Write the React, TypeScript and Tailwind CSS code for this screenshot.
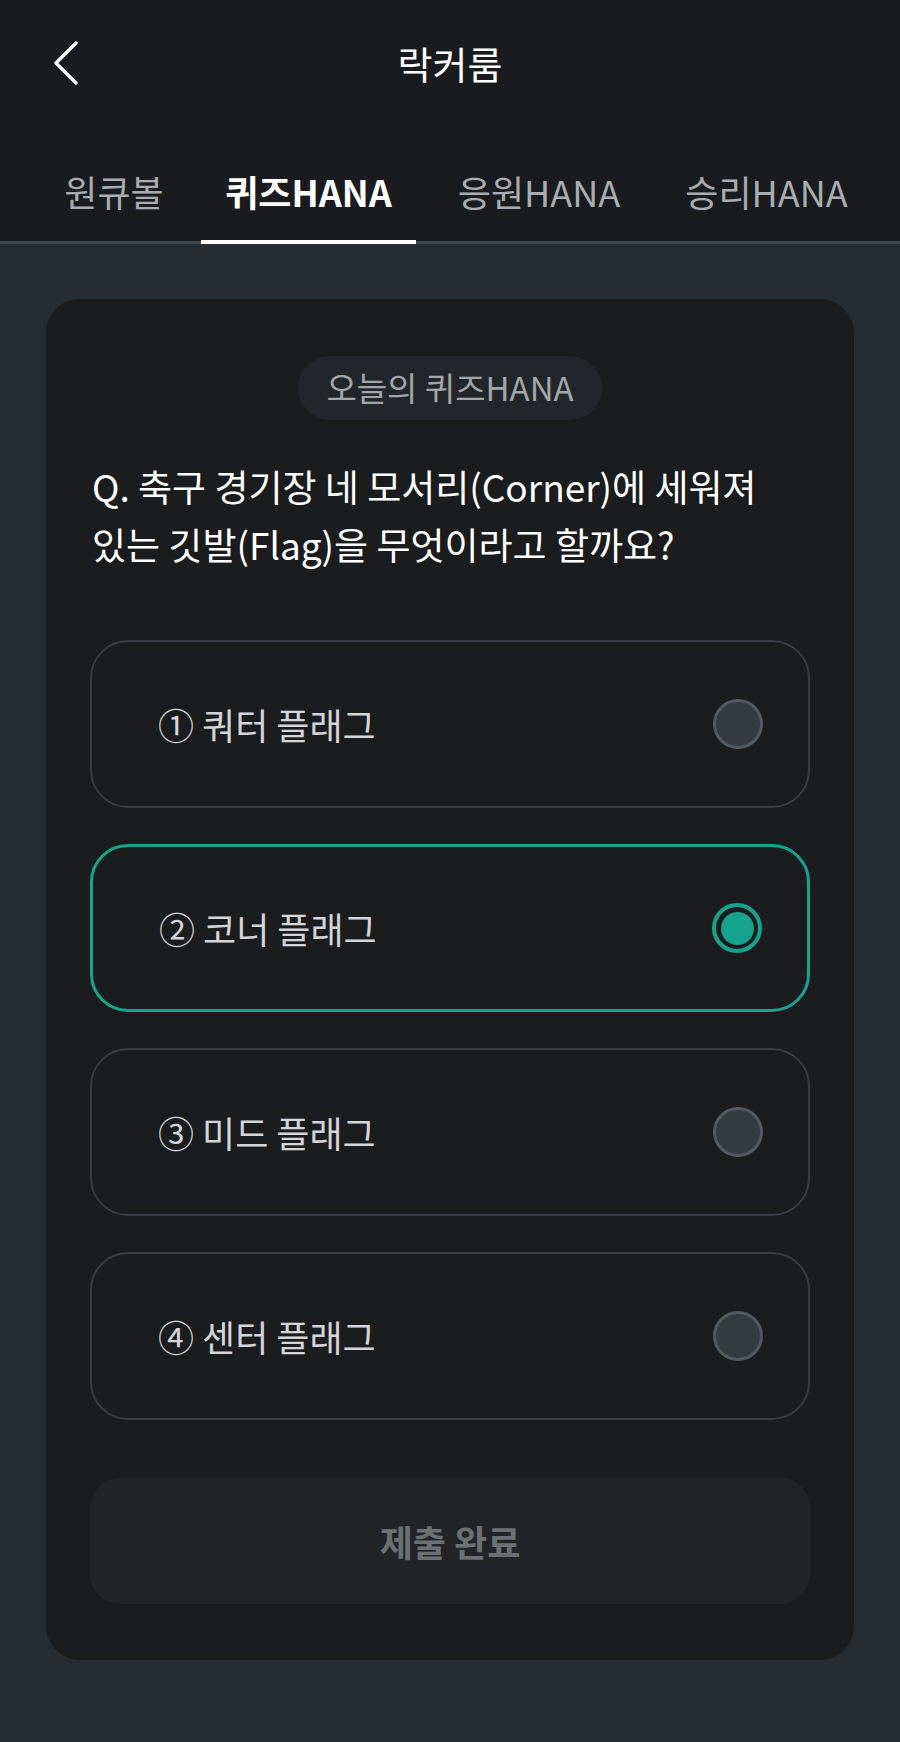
import { useState } from 'react';

/* =========================
   Data
========================= */
const TABS = [
  { label: '원큐볼', w: 'w-[136px]' },
  { label: '퀴즈HANA', w: 'w-[215px]' },
  { label: '응원HANA', w: 'w-[208px]' },
  { label: '승리HANA', w: 'w-[209px]' },
];

const OPTIONS = ['① 쿼터 플래그', '② 코너 플래그', '③ 미드 플래그', '④ 센터 플래그'];

/* =========================
   Page
========================= */
export default function App() {
  const [tab, setTab] = useState(1);
  const [picked, setPicked] = useState(1);

  return (
    <div
      className="min-h-[1742px] w-full bg-[#262c2f]"
      style={{ fontFamily: '"Noto Sans CJK KR", "Noto Sans", sans-serif' }}
    >
      {/* Header */}
      <header className="bg-[#1a1b1e] border-b-[3px] border-[#42484c]">
        <div className="grid h-[126px] grid-cols-[120px_1fr_120px] items-center">
          <div className="pl-[53px]">
            <button className="flex h-[44px] w-[26px] items-center" aria-label="back">
              <svg width="26" height="44" viewBox="0 0 26 44" fill="none">
                <path
                  d="M23 2 L3 22 L23 42"
                  stroke="#ffffff"
                  strokeWidth="3.2"
                  strokeLinecap="round"
                  strokeLinejoin="round"
                />
              </svg>
            </button>
          </div>
          <h1 className="text-center text-[38px] font-normal leading-none text-white">락커룸</h1>
          <div />
        </div>

        {/* Tabs */}
        <nav className="flex h-[115px] gap-[19px] pl-[46px]">
          {TABS.map((t, i) => (
            <button
              key={t.label}
              onClick={() => setTab(i)}
              className={`h-[118px] shrink-0 border-b-4 pt-[15px] text-center text-[36px] leading-[44px] ${t.w} ${
                tab === i ? 'border-white font-bold text-white' : 'border-transparent text-[#a9adb1]'
              }`}
            >
              {t.label}
            </button>
          ))}
        </nav>
      </header>

      {/* Quiz card */}
      <main className="px-[46px] pt-[55px] pb-[82px]">
        <section className="rounded-[34px] bg-[#1b1c1e] px-[44px] pt-[57px] pb-[56px]">
          <div className="mx-auto flex h-[64px] w-[304px] items-center justify-center rounded-full bg-[#222529] text-[33px] text-[#a3a7ab]">
            오늘의 퀴즈HANA
          </div>

          <p className="mt-[37px] pl-[2px] text-[37px] font-normal leading-[58px] text-white">
            Q. 축구 경기장 네 모서리(Corner)에 세워져
            <br />
            있는 깃발(Flag)을 무엇이라고 할까요?
          </p>

          <div className="mt-[67px] flex flex-col gap-[36px]">
            {OPTIONS.map((opt, i) => {
              const on = picked === i;
              return (
                <button
                  key={opt}
                  onClick={() => setPicked(i)}
                  className={`flex h-[168px] items-center justify-between rounded-[38px] pl-[66px] pr-[45px] ${
                    on ? 'border-[3px] border-[#13a58e]' : 'border-2 border-[#393c41]'
                  }`}
                >
                  <span className="text-[36px] text-[#d3d5d8]">{opt}</span>
                  {on ? (
                    <span className="flex h-[50px] w-[50px] items-center justify-center rounded-full border-4 border-[#14a38c]">
                      <span className="h-[33px] w-[33px] rounded-full bg-[#14a38c]" />
                    </span>
                  ) : (
                    <span className="h-[50px] w-[50px] rounded-full border-[3px] border-[#545961] bg-[#363a41]" />
                  )}
                </button>
              );
            })}
          </div>

          <button className="mt-[58px] flex h-[126px] w-full items-center justify-center rounded-[30px] bg-[#222427] text-[36px] font-bold text-[#6c7176]">
            제출 완료
          </button>
        </section>
      </main>
    </div>
  );
}
